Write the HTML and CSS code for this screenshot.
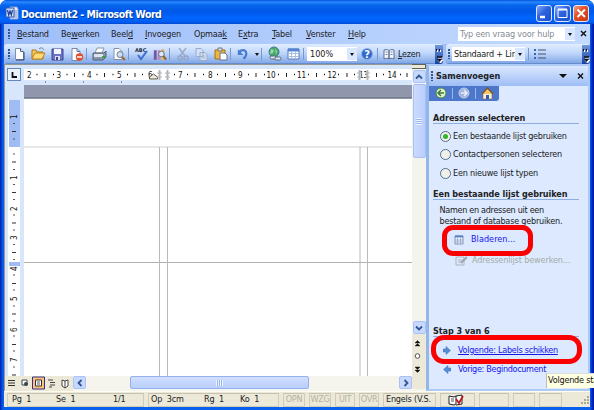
FILE: index.html
```html
<!DOCTYPE html>
<html lang="nl">
<head>
<meta charset="utf-8">
<title>Document2 - Microsoft Word</title>
<link rel="stylesheet" href="styles.css">
</head>
<body>
<div class="window">
  <header class="titlebar">
    <svg class="app-icon" width="14" height="15" viewBox="0 0 14 15"><path d="M5 1h7l1 2v10H5z" fill="#e8eefb" stroke="#8ba5d8"/><path d="M7 5h5M7 7h5M7 9h5M7 11h5" stroke="#7891c8"/><path d="M1 2h8v9H1z" fill="#d7e4fa" stroke="#305ab0"/><path d="M2.5 4l1.2 5L5 5l1.3 4 1.2-5" fill="none" stroke="#183c98" stroke-width="1.2"/></svg>
    <h1>Document2 - Microsoft Word</h1>
    <div class="window-buttons">
      <span class="wb"><svg width="17" height="17"><path d="M4 12h5" stroke="#fff" stroke-width="2.4"/></svg></span>
      <span class="wb"><svg width="17" height="17"><path d="M4 4.5h9v8H4z" fill="none" stroke="#fff"/><path d="M4 4.5h9" stroke="#fff" stroke-width="2"/></svg></span>
      <span class="wb close"><svg width="17" height="17"><path d="M4.5 4.5l7.5 7.5M12 4.5L4.5 12" stroke="#fff" stroke-width="2"/></svg></span>
    </div>
  </header>

  <nav class="menubar">
    <i class="grip"></i>
    <span class="m1"><u>B</u>estand</span><span class="m2">Be<u>w</u>erken</span><span class="m3">Beel<u>d</u></span><span class="m4"><u>I</u>nvoegen</span><span class="m5">Opmaa<u>k</u></span><span class="m6">E<u>x</u>tra</span><span class="m7"><u>T</u>abel</span><span class="m8"><u>V</u>enster</span><span class="m9"><u>H</u>elp</span>
    <div class="ask"><span>Typ een vraag voor hulp</span><i class="drop"></i></div>
    <svg class="menu-x" width="8" height="8"><path d="M1 1l5 5M6 1L1 6" stroke="#111" stroke-width="1.4"/></svg>
  </nav>

  <div class="toolbars">
    <div class="toolbar main-tools">
      <i class="grip"></i>
      <svg class="ic" viewBox="0 0 19 18"><path d="M5.5 3.500h5l3 3v8h-8z" fill="#fff" stroke="#8290ad"/><path d="M10.500 3.500v3h3" fill="#dbe5f5" stroke="#506388"/><path d="M14 7v8H6" fill="none" stroke="#35456d"/></svg>
      <svg class="ic" viewBox="0 0 19 18"><path d="M3 14V5h4l1 2h6v7z" fill="#f8c957" stroke="#b07819"/><path d="M3 14l3-6h10l-3 6z" fill="#ffdb76" stroke="#b88422"/><path d="M10 4c2-2 4-1 5 1" fill="none" stroke="#657fa6"/></svg>
      <svg class="ic" viewBox="0 0 19 18"><path d="M4 4h11v11H4z" fill="#6c72c8" stroke="#3d438f"/><path d="M6 4h7v5H6z" fill="#f3f5ff"/><path d="M7 11h5v4H7z" fill="#d9dcec"/><path d="M8 12h2v3H8z" fill="#404489"/></svg>
      <svg class="ic" viewBox="0 0 19 18"><path d="M5 3.500h5l3 3v9H5z" fill="#fff" stroke="#7989ab"/><path d="M10 3.500v3h3" fill="none" stroke="#617399"/><circle cx="12.500" cy="12" r="3.700" fill="#e34d2b"/><path d="M10 12h5" stroke="#fff" stroke-width="1.500"/></svg>
      <i class="sep"></i>
      <svg class="ic" viewBox="0 0 19 18"><path d="M7 3h7l-2 5H5z" fill="#fff" stroke="#8c98a9"/><path d="M3 8h11l2-2v6l-3 3H3z" fill="#8996a9" stroke="#526078"/><path d="M4 9h9v3H4z" fill="#dce5ef"/><path d="M12 11h3v2h-3z" fill="#35a73d"/></svg>
      <svg class="ic" viewBox="0 0 19 18"><path d="M5 3.500h5l3 3v8H5z" fill="#fff" stroke="#8390aa"/><circle cx="11" cy="9.500" r="3" fill="#cce0f2" stroke="#697d91"/><path d="M13 12l3 3" stroke="#9b6738" stroke-width="2"/></svg>
      <i class="sep"></i>
      <svg class="ic" viewBox="0 0 19 18"><text x="3" y="7" class="abc">ABC</text><path d="M6 10l3 4 6-8" fill="none" stroke="#3d70ce" stroke-width="2"/></svg>
      <svg class="ic wide18" viewBox="0 0 19 18"><path d="M3 5h3v10H3z" fill="#7656a2"/><path d="M7 5h3v10H7z" fill="#b98ab8"/><path d="M11 4h3v11h-3z" fill="#e2b350"/><circle cx="11" cy="9" r="3" fill="#dce8f5" stroke="#65738a"/><path d="M13 11l3 4" stroke="#846039" stroke-width="2"/></svg>
      <i class="sep"></i>
      <svg class="ic" viewBox="0 0 19 18"><path d="M6 3l6 8M13 3L7 11" stroke="#9eacc9" stroke-width="1.500"/><circle cx="7" cy="13" r="2" fill="none" stroke="#96a5c6" stroke-width="1.500"/><circle cx="13" cy="13" r="2" fill="none" stroke="#96a5c6" stroke-width="1.500"/></svg>
      <svg class="ic" viewBox="0 0 19 18"><path d="M4 3.500h5l2 2v6H4zM8 7.500h5l2 2v6H8z" fill="#d4e0f5" stroke="#9baac9"/><path d="M9.500 11h4M9.500 13h4" stroke="#a5b2cc"/></svg>
      <svg class="ic" viewBox="0 0 19 18"><path d="M4 5h10v9H4z" fill="#edb93c" stroke="#a86f17"/><path d="M7 3h4v3H7z" fill="#ddd" stroke="#777"/><path d="M9 8h5l2 2v5H9z" fill="#fff" stroke="#657392"/></svg>
      <i class="sep"></i>
      <svg class="ic wide18" viewBox="0 0 19 18"><path d="M5 7c7-6 11 2 5 7" fill="none" stroke="#4b7bd2" stroke-width="2.500"/><path d="M4 4v6h6z" fill="#4b7bd2"/></svg>
      <i class="arrow"></i>
      <i class="sep"></i>
      <svg class="ic" viewBox="0 0 19 18"><circle cx="9" cy="7" r="5" fill="#46a76b" stroke="#427b98"/><path d="M6 4l3 1-1 3-3 1M10 3l2 3-1 4" fill="#94daa5"/><rect x="5" y="11" width="6" height="3" rx="1.500" fill="#dfe6ef" stroke="#53647e"/><rect x="10" y="12" width="6" height="3" rx="1.500" fill="#dfe6ef" stroke="#53647e"/></svg>
      <svg class="ic" viewBox="0 0 19 18"><path d="M4 4h11v10H4z" fill="#fff" stroke="#5777b7"/><path d="M4 5h11" stroke="#5683d3" stroke-width="3"/><path d="M7.500 6v8M11.500 6v8M4 8.500h11M4 11.500h11" stroke="#a6bde4"/></svg>
      <i class="sep"></i>
      <div class="combo zoom-combo"><span>100%</span><i class="drop"></i></div>
      <svg class="ic help" viewBox="0 0 20 18"><circle cx="10" cy="9" r="5.500" fill="#3169ca" stroke="#91b1e9"/><text x="7.300" y="12.500" class="help-mark">?</text></svg>
      <i class="sep"></i>
      <svg class="ic reader" viewBox="0 0 17 18"><path d="M3 5c3-1 5 0 5 1v8c-1-1-3-1-5 0zM13 5c-3-1-5 0-5 1v8c1-1 3-1 5 0z" fill="#f5f8ff" stroke="#5c6e90"/><path d="M4.500 7h2M9.500 7h2M4.500 9.500h2M9.500 9.500h2" stroke="#71819f"/></svg>
      <span class="lezen"><u>L</u>ezen</span>
      <i class="overflow"><svg width="8" height="19"><path d="M2 5l1 1-1 1M5 5l1 1-1 1" fill="none" stroke="#fff"/><path d="M1 4l1 1-1 1M4 4l1 1-1 1" fill="none" stroke="#111"/><path d="M3 13h5M3 15h5L5.500 18z" fill="#fff" stroke="#fff"/><path d="M2 12h5" stroke="#111" stroke-width="1.300"/><path d="M2 14h5L4.500 17z" fill="#111"/></svg></i>
    </div>
    <div class="toolbar style-tools">
      <i class="grip"></i>
      <div class="combo style-combo"><span>Standaard + Lin</span><i class="drop"></i></div>
      <i class="sep"></i>
      <svg class="bullets" width="14" height="12"><path d="M4 2h8M4 6h8M4 10h8" stroke="#42516d"/><path d="M0 2h2M0 6h2M0 10h2" stroke="#3466b7" stroke-width="2"/></svg>
      <i class="overflow"><svg width="8" height="19"><path d="M2 5l1 1-1 1M5 5l1 1-1 1" fill="none" stroke="#fff"/><path d="M1 4l1 1-1 1M4 4l1 1-1 1" fill="none" stroke="#111"/><path d="M3 13h5M3 15h5L5.500 18z" fill="#fff" stroke="#fff"/><path d="M2 12h5" stroke="#111" stroke-width="1.300"/><path d="M2 14h5L4.500 17z" fill="#111"/></svg></i>
    </div>
  </div>

  <main class="workspace">
    <section class="editor">
      <div class="ruler-row">
        <span class="tab-box"><svg width="12" height="12"><path d="M4.500 3v5H9" fill="none" stroke="#111" stroke-width="1.800"/></svg></span>
        <svg class="ruler" width="388" height="20" viewBox="24 65 388 20">
          <path d="M24 69h388v11H24z" fill="#fff"/>
          <path d="M36.500 74.500h1M53 74.500h1M66.500 74.500h1M82.500 74.500h1M96.500 74.500h1M112.500 74.500h1M127 74.500h1M142 74.500h1M174 74.500h1M187 74.500h1M203 74.500h1M217 74.500h1M234 74.500h1M248 74.500h1M264 74.500h1M278 74.500h1M294 74.500h1M308 74.500h1M324 74.500h1M338 74.500h1M354 74.500h1M383 74.500h1M400 74.500h1" stroke="#111" stroke-width="1.500"/>
          <path d="M45 73v4M74.500 73v4M104.500 73v4M135 73v4M195 73v4M225.500 73v4M256 73v4M286.500 73v4M316.500 73v4M347 73v4M376.500 73v4M407 73v4" stroke="#222"/>
          <g class="numbers"><text x="27" y="78">2</text><text x="56.500" y="78">3</text><text x="87" y="78">4</text><text x="117" y="78">5</text><text x="148" y="78">6</text><text x="178" y="78">7</text><text x="208" y="78">8</text><text x="238" y="78">9</text><text x="266.500" y="78">10</text><text x="297" y="78">11</text><text x="327.500" y="78">12</text><text x="359" y="78">13</text><text x="387.500" y="78">14</text></g>
          <path d="M45.500 81v2M83.500 81v2M121.500 81v2" stroke="#8b939e"/>
          <path d="M149.500 79v-2l4-3 4 3v2z" fill="#eee8d7" stroke="#555"/>
          <path d="M158 70h3v10h-3zM166 70h3v10h-3zM358 70h3v10h-3zM366 70h3v10h-3z" fill="#c1cfe5" fill-opacity=".7"/>
          <path d="M157 73h5M157 77h5M165 73h5M165 77h5M357 73h5M357 77h5M365 73h5M365 77h5M159.500 70v10M167.500 70v10M359.500 70v10M367.500 70v10" stroke="#b5b3ab"/>
        </svg>
      </div>
      <div class="page-row">
        <svg class="v-ruler" width="20" height="291" viewBox="4 85 20 291">
          <path d="M8 98h12v278H8z" fill="#fff"/><path d="M8 98h12v2H8z" fill="#d8e6fc"/><path d="M9 100h11v47H9zM9 262h11v4H9z" fill="#a0bcf5"/>
          <path d="M12 131.500h4M12 162h4M12 192.500h4M12 223h4M12 252.500h4M12 283.500h4M12 314h4M12 344.500h4M12 375h4" stroke="#333"/>
          <path d="M13 123.500h2M13 139h2M13 154h2M13 169.500h2M13 184.500h2M13 199.500h2M13 215h2M13 230h2M13 244.500h2M13 259.500h2M13 275h2M13 290h2M13 306h2M13 321h2M13 336h2M13 351h2M13 367h2" stroke="#555"/>
          <g class="numbers"><text transform="translate(17 119) rotate(-90)">1</text><text transform="translate(17 180) rotate(-90)">1</text><text transform="translate(17 211) rotate(-90)">2</text><text transform="translate(17 240) rotate(-90)">3</text><text transform="translate(17 271) rotate(-90)">4</text><text transform="translate(17 301) rotate(-90)">5</text><text transform="translate(17 332) rotate(-90)">6</text><text transform="translate(17 362) rotate(-90)">7</text></g>
        </svg>
        <svg class="page" width="388" height="291" viewBox="24 85 388 291"><path d="M24 85h388v13H24z" fill="#9097ac"/><path d="M24 98h388" stroke="#6d7385" stroke-width="1.500"/><path d="M24 147h388" stroke="#d0d0d0"/><path d="M24 262.500h388" stroke="#b0b0b0"/><path d="M159.500 147v229M167.500 147v229M360 147v229M367.500 147v229" stroke="#b9b9b9"/></svg>
      </div>
      <div class="view-row">
        <svg width="69" height="15" viewBox="4 376 69 15"><path d="M8 380.500h7M8 383h7M8 385.500h7" stroke="#333"/><path d="M22 380h5v5h-5z" fill="#fff" stroke="#444"/><circle cx="26" cy="384" r="2" fill="#345"/><path d="M32.500 377h12v12h-12z" fill="#ffc17a" stroke="#31308c"/><path d="M35.500 380h6v6h-6z" fill="#fff" stroke="#333"/><path d="M37 382h3M37 384h3" stroke="#555"/><path d="M48 380h5M50 382.500h5M50 385h5M49 387h3" stroke="#444"/><path d="M62 380l3 1 3-1v6l-3 2-3-2zM65 381v7" fill="#fff" stroke="#444"/></svg>
        <div class="hscroll"><span class="sb"><svg width="12" height="12"><path d="M7.500 3L4.500 6l3 3" fill="none" stroke="#34548f" stroke-width="1.800"/></svg></span><span class="hthumb"><i></i></span><span class="sb right"><svg width="12" height="12"><path d="M4.500 3l3 3-3 3" fill="none" stroke="#34548f" stroke-width="1.800"/></svg></span></div>
      </div>
    </section>
    <div class="vscroll">
      <i class="split"></i>
      <span class="sb"><svg width="12" height="12"><path d="M3 7.500l3-3 3 3" fill="none" stroke="#34548f" stroke-width="1.800"/></svg></span>
      <span class="vthumb"><i></i></span>
      <span class="sb down"><svg width="12" height="12"><path d="M3 4.500l3 3 3-3" fill="none" stroke="#34548f" stroke-width="1.800"/></svg></span>
      <svg class="browse-object" width="14" height="55" viewBox="0 0 14 55"><path d="M3 9l2.500-2.500L8 9zM3 12l2.500-2.500L8 12zM3 33l2.500 2.500L8 33zM3 36l2.500 2.500L8 36z" fill="#111" stroke="#111" stroke-width=".4"/><circle cx="5.500" cy="22" r="2.300" fill="#fff" stroke="#555"/></svg>
    </div>
    <aside class="pane">
      <div class="pane-head"><i class="grip"></i><b>Samenvoegen</b><svg class="pane-controls" width="30" height="9"><path d="M1 2h8L5 6z" fill="#111"/><path d="M20 1.500l5 5M25 1.500l-5 5" stroke="#111" stroke-width="1.400"/></svg></div>
      <div class="pane-nav"><svg width="70" height="15"><circle cx="12" cy="7" r="5" fill="#e6f3d1" stroke="#448443"/><path d="M15 7h-5M12 4L9 7l3 3" fill="none" stroke="#397b3b" stroke-width="1.500"/><path d="M23.500 2v11M46.500 2v11" stroke="#9bb9ed"/><circle cx="35" cy="7" r="5" fill="#9fb3dc" stroke="#c3d1ee"/><path d="M32 7h5M35 4l3 3-3 3" fill="none" stroke="#e8effb" stroke-width="1.500"/><path d="M54 7h9v6h-9z" fill="#f8edce" stroke="#86623b" stroke-width=".5"/><path d="M53 8l5.500-6L64 8" fill="#f2c970" stroke="#805329" stroke-width="1.500"/><path d="M57 9h3v4h-3z" fill="#315eb0"/></svg></div>
      <div class="pane-body">
        <h2>Adressen selecteren</h2>
        <div class="radios">
          <label class="r1"><i class="radio checked"></i><span>Een bestaande lijst gebruiken</span></label>
          <label class="r2"><i class="radio"></i><span>Contactpersonen selecteren</span></label>
          <label class="r3"><i class="radio"></i><span>Een nieuwe lijst typen</span></label>
        </div>
        <h2 class="second">Een bestaande lijst gebruiken</h2>
        <p><span class="p1">Namen en adressen uit een</span><br><span class="p2">bestand of database gebruiken.</span></p>
        <a class="browse"><svg width="10" height="10"><path d="M1 1h8v8H1z" fill="#fff" stroke="#7c93bd"/><path d="M1 1.500h8" stroke="#5780c8" stroke-width="2"/><path d="M3.500 3v6M6.500 3v6M1 5h8M1 7h8" stroke="#9caccc"/></svg><span>Bladeren...</span></a>
        <a class="edit-list"><svg width="14" height="11"><path d="M1 2h8v8H1zM3 5h5M3 7h3" fill="none" stroke="#abb4bd"/><path d="M6 8l6-6" stroke="#9ca5b1" stroke-width="2"/></svg><span>Adressenlijst bewerken...</span></a>
        <h2 class="step">Stap 3 van 6</h2>
        <a class="next"><svg width="8" height="9"><path d="M0 3h3V.5L7.500 4.500 3 8.500V6H0z" fill="#568ed5" stroke="#386cb8" stroke-width=".5"/></svg><span>Volgende: Labels schikken</span></a>
        <a class="previous"><svg width="8" height="9"><path d="M8 3H5V.5L.5 4.500 5 8.500V6h3z" fill="#568ed5" stroke="#386cb8" stroke-width=".5"/></svg><span>Vorige: Begindocument</span></a>
      </div>
    </aside>
  </main>

  <footer class="statusbar">
    <div class="s-page"><span>Pg&nbsp; 1</span><span>Se&nbsp; 1</span><span>1/1</span></div>
    <div class="s-pos"><span>Op&nbsp; 3cm</span><span>Rg&nbsp; 1</span><span>Ko&nbsp; 1</span></div>
    <div class="flag f1">OPN</div><div class="flag f2">WZG</div><div class="flag f3">UIT</div><div class="flag f4">OVR</div>
    <div class="lang">Engels (V.S.</div>
    <div class="proof"><svg width="17" height="12"><path d="M1 2l5 1 2-1v8l-2 1-5-1zM8 2l6-1v9l-6 1" fill="#fff" stroke="#222"/><path d="M3 5h3M3 7h3" stroke="#555"/><path d="M8 5l3 4 4-7" fill="none" stroke="#bd1822" stroke-width="1.800"/></svg></div>
    <div class="blank"></div><div class="blank b2"></div><div class="blank b3"></div>
    <svg class="resize" width="10" height="13"><path d="M7 4h2M4 7h2M7 7h2M1 10h2M4 10h2M7 10h2" stroke="#aaa89a" stroke-width="2"/></svg>
  </footer>
</div>
<i class="ring ring-browse"></i><i class="ring ring-next"></i>
<div class="tooltip"><span>Volgende stap</span></div>
</body>
</html>
```
FILE: styles.css
```css
* { box-sizing: border-box; }
body { margin: 0; width: 594px; height: 410px; overflow: hidden; background: #fff; font: 9px/11px "DejaVu Sans Condensed", "DejaVu Sans", sans-serif; font-stretch: condensed; letter-spacing: -.2px; color: #202124; white-space: nowrap; }
i { display: block; flex: none; } svg { display: block; flex: none; }
u { text-decoration-thickness: 1px; text-underline-offset: 1px; }
.window { width: 594px; height: 410px; display: flex; flex-direction: column; padding: 0 4px 3px; background: linear-gradient(90deg, #001eaf, #0860ed 3px, #0860ed 590px, #002bc5 592px, #00139b); border-radius: 7px 7px 0 0; overflow: hidden; }
.titlebar { height: 24px; flex: none; margin: 0 -4px; padding: 3px 5px 0; display: flex; align-items: center; background: linear-gradient(#0053dc, #2a89ff 2px, #0866ee 5px, #0057e7 11px, #0066ff 18px, #005df1 22px, #0045ce); }
.titlebar h1 { margin: 0 0 0 2px; color: white; font: bold 10.5px/16px "DejaVu Sans Condensed", "DejaVu Sans", sans-serif; font-stretch: condensed; letter-spacing: -.47px; text-shadow: 1px 1px #093998; }
.window-buttons { display: flex; gap: 2px; margin-left: auto; }
.wb { width: 16.500px; height: 17px; border: 1px solid #dceaff; border-radius: 3px; background: linear-gradient(135deg, #7fa9ff, #2d62dd 45%, #1451cf); }
.wb svg { margin: -1px; }
.close { background: linear-gradient(135deg, #f7a18d, #e55127 40%, #c83812); }
.menubar { height: 20px; flex: none; display: flex; align-items: center; background: linear-gradient(90deg, #9ebefa, #c4daff); }
.grip { width: 2px; height: 10px; background: repeating-linear-gradient(#34538d 0 2px, transparent 2px 3px); margin-left: 4px; }
.menubar .grip { margin-right: 7px; }
.m1 { width: 44px; } .m2 { width: 50px; } .m3 { width: 34px; } .m4 { width: 49px; } .m5 { width: 44px; } .m6 { width: 34px; } .m7 { width: 34px; } .m8 { width: 42px; } .m9 { width: 20px; }
.ask { height: 14px; width: 117px; margin-left: auto; display: flex; align-items: center; justify-content: space-between; background: #fff; color: #858b95; padding-left: 2px; letter-spacing: -.15px; }
.menu-x { margin: 0 2px 0 5px; }
.drop { width: 10px; height: 12px; display: flex; align-items: center; justify-content: center; background: #d9e8ff; }
.drop::after, .arrow::after { content: ""; display: block; border-left: 2px solid transparent; border-right: 2px solid transparent; border-top: 3px solid #111; }
.toolbars { height: 20px; flex: none; display: flex; background: #a1bff5; }
.toolbar { height: 20px; display: flex; align-items: center; background: linear-gradient(#e0edff, #c1d7fb 45%, #83a9e7 94%, #5178bb); border-radius: 3px; overflow: hidden; }
.main-tools { width: 439px; margin-right: 3px; flex: none; } .style-tools { flex: 1; }
.ic { width: 19px; height: 18px; }
.sep { width: 4px; height: 12px; border-left: 1px solid #7697cf; }
.ic.wide18 { width: 18px; }
.arrow { width: 9px; display: flex; justify-content: center; }
.abc { font: bold 5px "DejaVu Sans", sans-serif; fill: #222d43; letter-spacing: 0; }
.combo { display: flex; align-items: center; justify-content: space-between; background: #fff; height: 14px; overflow: hidden; }
.combo > span { overflow: hidden; }
.zoom-combo { width: 50px; padding-left: 3px; letter-spacing: 0; }
.help { width: 20px; } .help-mark { font: bold 10px "DejaVu Sans", sans-serif; fill: #fff; }
.reader { width: 17px; }
.lezen { letter-spacing: -.3px; }
.overflow { width: 8px; height: 19px; margin-left: auto; background: linear-gradient(#7198dc, #1742a1); }
.style-tools .grip { margin-left: 2px; } .style-combo { width: 73px; margin-left: 2px; padding-left: 2px; margin-right: 3px; }
.bullets { margin-left: 2px; }
.workspace { height: 327px; flex: none; display: flex; background: #f2f3ee; }
.editor { width: 408px; flex: none; display: flex; flex-direction: column; background: #d8e6fc; border-left: 1px solid #969893; border-top: 1px solid #969893; }
.ruler-row { height: 20px; display: flex; }
.tab-box { width: 14px; height: 13px; border: 1px solid #6485bd; background: #eaf2ff; margin: 3px 3px 0 2px; }
.numbers text { font: 8px "DejaVu Sans Condensed", "DejaVu Sans", sans-serif; letter-spacing: -.2px; fill: #111; }
.page-row { height: 291px; display: flex; } .page { background: #fff; } .v-ruler { margin-left: -1px; }
.view-row { height: 15px; display: flex; background: #ece9d8; } .view-row > svg { margin-left: -1px; }
.hscroll { width: 339px; display: flex; background: #f5f5ed; }
.sb { display: flex; width: 13px; height: 13px; flex: none; border: 1px solid #a9c1f6; border-radius: 2px; background: #c8d9ff; align-items: center; justify-content: center; }
.hthumb { width: 179px; height: 13px; margin-left: 44px; border: 1px solid #94b0ed; border-radius: 2px; background: linear-gradient(#d2dfff, #b8ceff); display: flex; justify-content: center; align-items: center; }
.hthumb i { width: 7px; height: 6px; background: repeating-linear-gradient(90deg, #eef4ff 0 1px, #99b3ec 1px 2px); }
.right { margin-left: auto; }
.vscroll { width: 14px; display: flex; flex-direction: column; align-items: center; background: #f4f3ed; }
.split { width: 14px; height: 5px; border: 1px solid #5f6055; border-left: 0; background: #ece9d8; margin-bottom: 1px; }
.vthumb { width: 13px; height: 74px; flex: none; border: 1px solid #a8bff1; border-radius: 2px; background: linear-gradient(90deg, #cbdbff, #bacdff); display: flex; align-items: center; justify-content: center; margin-top: 1px; }
.vthumb i { width: 6px; height: 7px; background: repeating-linear-gradient(#eef4ff 0 1px, #9ab4ee 1px 2px); }
.down { margin-top: 163px; }
.browse-object { background: #ece9d8; }
.pane { flex: 1; display: flex; flex-direction: column; border: solid #adcaf8; border-width: 2px 2px 2px 3px; border-left-color: #94b6e8; background: #dce9fe; }
.pane-head { height: 20px; display: flex; align-items: center; background: linear-gradient(#dce9ff, #9dbdf6); }
.pane-head .grip { margin: 0 3px 0 2px; } .pane-head b { letter-spacing: -.02px; }
.pane-controls { margin-left: auto; margin-right: 0; }
.pane-nav { width: 70px; height: 15px; flex: none; background: #4c77ca; border-radius: 0 0 3px 0; }
.pane-body { padding: 11px 9px 0 4px; display: flex; flex-direction: column; }
.pane h2 { margin: 0; height: 12px; font: bold 9px/12px "DejaVu Sans Condensed", "DejaVu Sans", sans-serif; font-stretch: condensed; letter-spacing: -.06px; border-bottom: 1px solid #8eaedf; }
.radios { padding: 3px 0 0 7px; }
.radios label { height: 18.5px; display: flex; align-items: center; gap: 2px; }
.r1 { letter-spacing: -.23px; }
.radio { width: 11px; height: 11px; border: 1px solid #526f92; border-radius: 50%; background: #f1f0e8; display: flex; justify-content: center; align-items: center; }
.checked::after { content: ""; width: 5px; height: 5px; background: #2eb52b; border-radius: 50%; }
.pane .second { margin-top: 5px; }
.pane p { margin: 5px 0 0 6.500px; height: 23px; line-height: 11px; } .p1 { letter-spacing: -.3px; }
.pane a { display: flex; align-items: center; height: 12px; color: #1717ee; }
.pane .browse { margin: 6px 0 0 21px; letter-spacing: .05px; } .browse span { margin-left: 7px; }
.pane .edit-list { margin: 9px 0 0 22px; color: #a5a9a7; letter-spacing: -.12px; } .edit-list span { margin-left: 3px; }
.pane .step { margin-top: 58px; }
.pane .next { margin: 8px 0 0 10px; letter-spacing: -.27px; } .next span, .previous span { margin-left: 7px; } .next span { text-decoration: underline; }
.pane .previous { margin: 7px 0 0 10px; letter-spacing: -.32px; }
.statusbar { height: 16px; flex: none; display: flex; align-items: center; background: #ece9d8; padding-left: 3px; border-top: 1px solid #fffdf0; gap: 4px; }
.statusbar > div { height: 14px; flex: none; display: flex; align-items: center; border: 1px solid #d0ccba; border-top-color: #c5c2b4; }
.s-page { width: 137px; padding-left: 4px; } .s-page span { width: 44px; } .s-page span:nth-child(2) { width: 57px; } .s-page span:last-child { width: auto; }
.s-pos { width: 131px; padding-left: 2px; } .s-pos span { width: 53px; } .s-pos span + span { width: 36px; } .s-pos span:last-child { width: auto; }
.statusbar .flag { color: #b4b1a1; justify-content: center; width: 22px; }
.statusbar .f2 { letter-spacing: -.35px; } .statusbar .f3, .statusbar .f4 { width: 20px; letter-spacing: -.35px; }
.statusbar .lang { width: 53px; padding-left: 2px; overflow: hidden; }
.statusbar .proof { width: 35px; padding-right: 3px; justify-content: center; }
.statusbar .blank { width: 30px; } .statusbar .b2 { width: 22px; } .statusbar .b3 { width: 23px; }
.resize { margin-left: auto; }
.ring { position: absolute; border: 5px solid #fb0000; }
.ring-browse { left: 442px; top: 225px; width: 91px; height: 31px; border-radius: 11px; }
.ring-next { left: 431px; top: 335px; width: 151px; height: 29px; border-radius: 13px; }
.tooltip { position: absolute; left: 546px; top: 373px; width: 48px; height: 15px; overflow: hidden; background: #ffffe1; border-left: 1px solid #bbb; border-top: 1px solid #ddd; padding: 1px 0 0 1px; color: #111; }
```
